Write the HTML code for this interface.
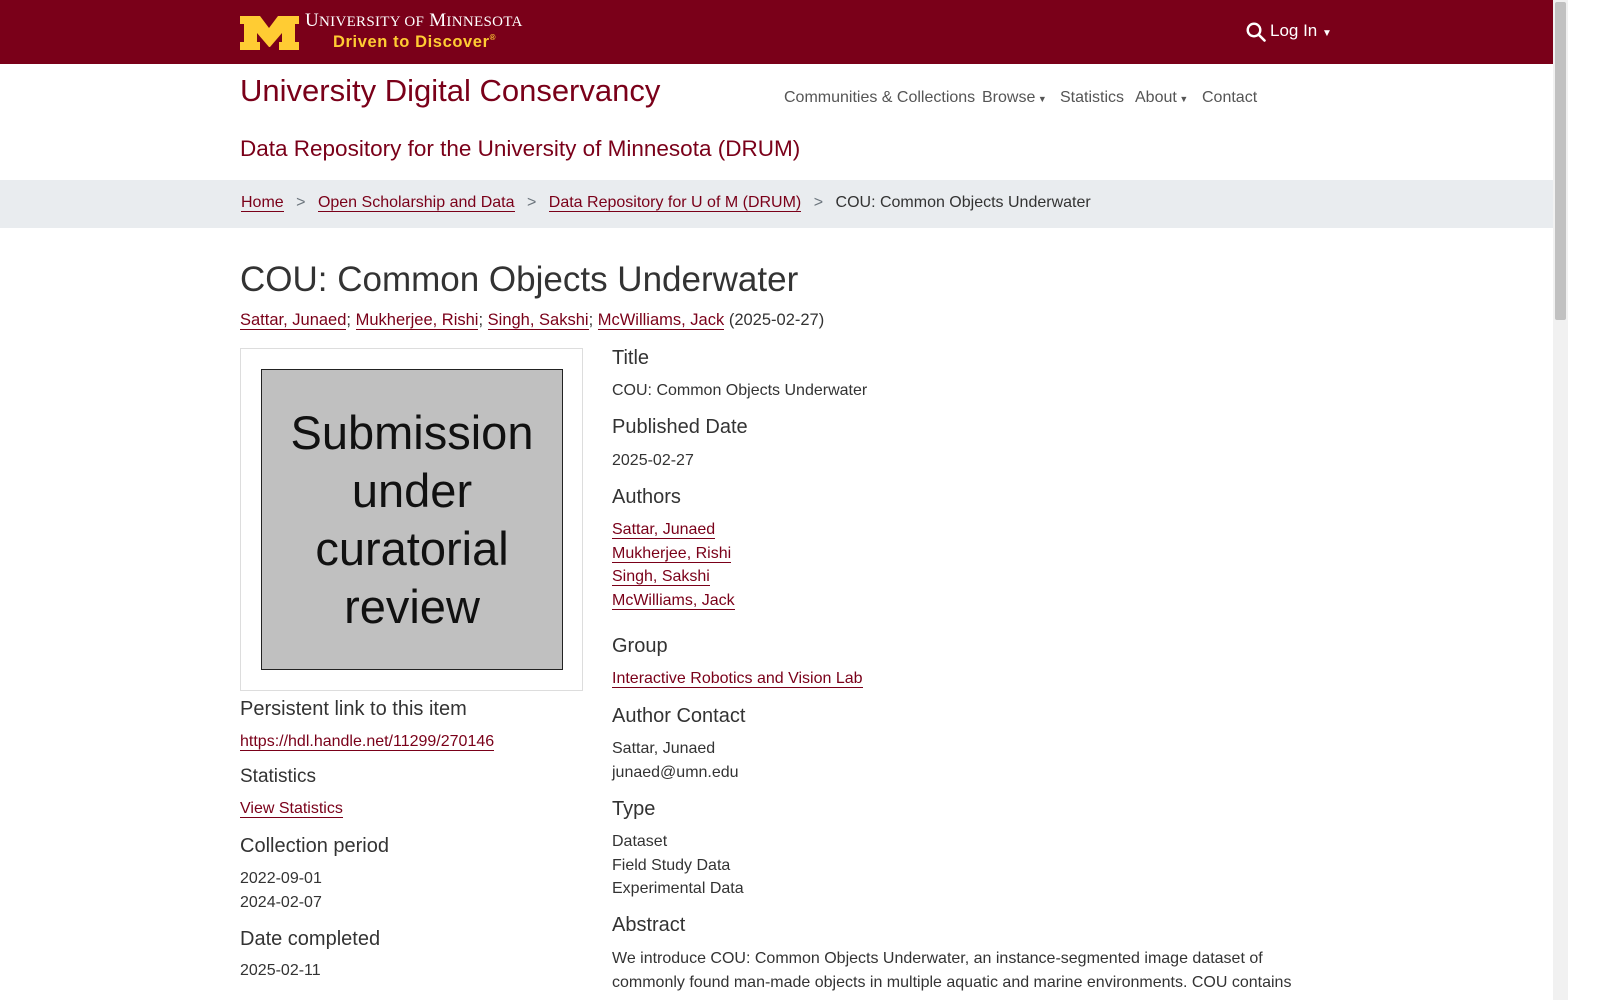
<!DOCTYPE html>
<html><head><meta charset="utf-8"><style>
*{box-sizing:border-box;margin:0;padding:0}
body{width:1600px;height:1000px;overflow:hidden;font-family:"Liberation Sans",sans-serif;color:#333;font-size:16px;background:#fff;position:relative}
a{color:#7a0019;text-decoration:none;border-bottom:1px solid #7a0019}
.top{position:absolute;left:0;top:0;width:1553px;height:64px;background:#7a0019}
.sb{position:absolute;left:1553px;top:0;width:15px;height:1000px;background:#f1f1f1}
.sb div{position:absolute;left:2px;top:2px;width:11px;height:318px;background:#c1c1c1;border-radius:2px}
.abs{position:absolute}
.nav{color:#555;font-size:16px}
h5{font-size:20px;font-weight:normal;color:#333;position:absolute}
.v{position:absolute;font-size:16px;line-height:23.5px}
</style></head><body>
<div class="top">
<svg class="abs" style="left:240px;top:16px" width="60" height="35" viewBox="0 0 60 35"><polygon fill="#ffcc33" points="0,0 20,0 29,12 38,0 59,0 59,8 55,8 55,26 59,26 59,34 39,34 39,26 42,26 42,17 30,31 29,31 17,17 17,26 20,26 20,34 0,34 0,26 4,26 4,8 0,8"/></svg>
<div class="abs" style="left:305px;top:10px;color:#fff;font-family:'Liberation Serif',serif;font-size:19px;letter-spacing:0.3px">U<span style="font-size:15px">NIVERSITY OF</span> M<span style="font-size:15px">INNESOTA</span></div>
<div class="abs" style="left:333px;top:33px;color:#ffcc33;font-size:16.5px;font-weight:bold;letter-spacing:0.6px">Driven to Discover<span style="font-size:8px;vertical-align:top">®</span></div>
<svg class="abs" style="left:1246px;top:22px" width="20" height="20" viewBox="0 0 20 20"><circle cx="8" cy="8" r="6.3" fill="none" stroke="#fff" stroke-width="2.4"/><line x1="12.5" y1="12.5" x2="18.5" y2="18.5" stroke="#fff" stroke-width="2.6" stroke-linecap="round"/></svg>
<div class="abs" style="left:1270px;top:21px;color:#fff;font-size:17px">Log In <span style="font-size:10px">▼</span></div>
</div>
<div class="sb"><div></div></div>
<div class="abs" style="left:240px;top:73px;font-size:31px;color:#7a0019">University Digital Conservancy</div>
<div class="abs nav" style="left:784px;top:89px">Communities &amp; Collections</div>
<div class="abs nav" style="left:982px;top:89px">Browse<span style="font-size:9px"> ▼</span></div>
<div class="abs nav" style="left:1060px;top:89px">Statistics</div>
<div class="abs nav" style="left:1135px;top:89px">About<span style="font-size:9px"> ▼</span></div>
<div class="abs nav" style="left:1202px;top:89px">Contact</div>
<div class="abs" style="left:240px;top:136px;font-size:22.5px;color:#7a0019">Data Repository for the University of Minnesota (DRUM)</div>
<div class="abs" style="left:0;top:180px;width:1553px;height:48px;background:#e9ecef"></div>
<div class="abs" style="left:241px;top:194px;font-size:16px;color:#333;white-space:nowrap"><a>Home</a> <span style="color:#6c757d;margin:0 8px">&gt;</span> <a>Open Scholarship and Data</a> <span style="color:#6c757d;margin:0 8px">&gt;</span> <a>Data Repository for U of M (DRUM)</a> <span style="color:#6c757d;margin:0 8px">&gt;</span> COU: Common Objects Underwater</div>
<div class="abs" style="left:240px;top:260px;font-size:35px;color:#333">COU: Common Objects Underwater</div>
<div class="abs" style="left:240px;top:311px;font-size:16.5px;white-space:nowrap"><a>Sattar, Junaed</a>; <a>Mukherjee, Rishi</a>; <a>Singh, Sakshi</a>; <a>McWilliams, Jack</a> (2025-02-27)</div>
<div class="abs" style="left:240px;top:348px;width:343px;height:343px;border:1px solid #ddd"></div>
<div class="abs" style="left:261px;top:369px;width:302px;height:301px;background:#c0c0c0;border:1px solid #222;text-align:center;font-size:47px;line-height:58px;padding-top:34px;color:#111">Submission<br>under<br>curatorial<br>review</div>
<h5 style="left:240px;top:698px">Persistent link to this item</h5>
<div class="v" style="left:240px;top:730px"><a>https://hdl.handle.net/11299/270146</a></div>
<h5 style="left:240px;top:766px;font-size:19px">Statistics</h5>
<div class="v" style="left:240px;top:797px"><a>View Statistics</a></div>
<h5 style="left:240px;top:835px">Collection period</h5>
<div class="v" style="left:240px;top:867px">2022-09-01<br>2024-02-07</div>
<h5 style="left:240px;top:928px">Date completed</h5>
<div class="v" style="left:240px;top:959px">2025-02-11</div>
<h5 style="left:612px;top:347px">Title</h5>
<div class="v" style="left:612px;top:379px">COU: Common Objects Underwater</div>
<h5 style="left:612px;top:416px">Published Date</h5>
<div class="v" style="left:612px;top:449px">2025-02-27</div>
<h5 style="left:612px;top:486px">Authors</h5>
<div class="v" style="left:612px;top:518px"><a>Sattar, Junaed</a><br><a>Mukherjee, Rishi</a><br><a>Singh, Sakshi</a><br><a>McWilliams, Jack</a></div>
<h5 style="left:612px;top:635px">Group</h5>
<div class="v" style="left:612px;top:667px"><a>Interactive Robotics and Vision Lab</a></div>
<h5 style="left:612px;top:705px">Author Contact</h5>
<div class="v" style="left:612px;top:737px">Sattar, Junaed<br>junaed@umn.edu</div>
<h5 style="left:612px;top:798px">Type</h5>
<div class="v" style="left:612px;top:830px">Dataset<br>Field Study Data<br>Experimental Data</div>
<h5 style="left:612px;top:914px">Abstract</h5>
<div class="v" style="left:612px;top:947px;width:720px">We introduce COU: Common Objects Underwater, an instance-segmented image dataset of commonly found man-made objects in multiple aquatic and marine environments. COU contains</div>
</body></html>
